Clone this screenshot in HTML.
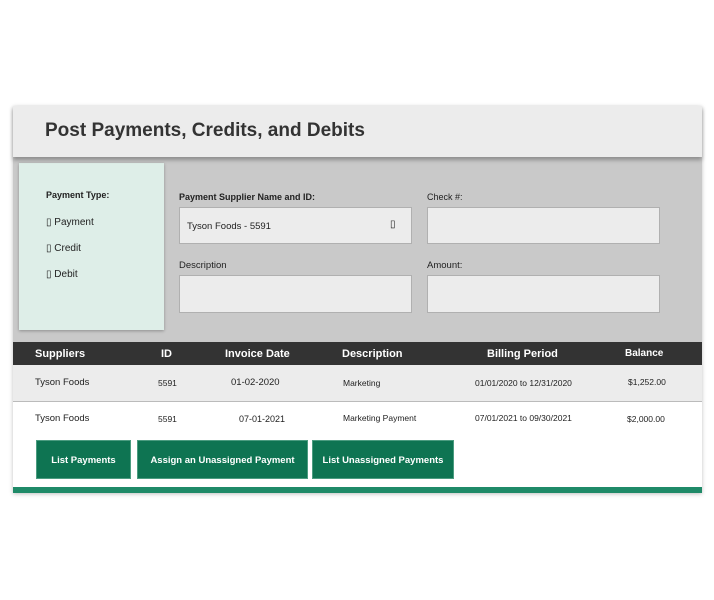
<!DOCTYPE html>
<html><head><style>
*{margin:0;padding:0;box-sizing:border-box}
body{width:714px;height:600px;background:#fff;font-family:"Liberation Sans",sans-serif;position:relative;overflow:hidden;color:#222}
.a{position:absolute}
.card{left:13px;top:106px;width:689px;height:387px;background:#fff;box-shadow:0 1px 4px rgba(0,0,0,.25)}
.hdr{left:13px;top:106px;width:689px;height:51px;background:#ececec;box-shadow:0 3px 4px rgba(0,0,0,.3);z-index:2}
.hdr span{position:absolute;left:32px;top:14px;font-size:19px;font-weight:bold;color:#333}
.gray{left:13px;top:157px;width:689px;height:185px;background:#c9c9c9}
.lp{left:19px;top:163px;width:145px;height:167px;background:#deeee8;box-shadow:0 1px 3px rgba(0,0,0,.3);font-size:10px}
.lbl{font-size:9px;font-weight:bold;color:#222}
.inp{background:#ececec;border:1px solid #b0b0b0}
.th{left:13px;top:342px;width:689px;height:23px;background:#333;color:#fff;font-weight:bold;font-size:11px}
.th span,.r span{position:absolute;top:6px}
.r{left:13px;width:689px;font-size:9px}
.btn{background:#0e7452;color:#fff;font-size:9.5px;font-weight:bold;top:440px;height:39px;line-height:39px;text-align:center;border:1px solid #4b9c80}
</style></head><body>
<div class="a card"></div>
<div class="a hdr"><span>Post Payments, Credits, and Debits</span></div>
<div class="a gray"></div>
<div class="a lp">
<div class="a lbl" style="left:27px;top:27px">Payment Type:</div>
<div class="a" style="left:27px;top:54px">▯ Payment</div>
<div class="a" style="left:27px;top:80px">▯ Credit</div>
<div class="a" style="left:27px;top:106px">▯ Debit</div>
</div>
<div class="a lbl" style="left:179px;top:192px">Payment Supplier Name and ID:</div>
<div class="a inp" style="left:179px;top:207px;width:233px;height:37px"><span class="a" style="left:7px;top:13px;font-size:9.5px">Tyson Foods - 5591</span><span class="a" style="left:210px;top:11px;font-size:10px">▯</span></div>
<div class="a" style="left:179px;top:260px;font-size:9.5px">Description</div>
<div class="a inp" style="left:179px;top:275px;width:233px;height:38px"></div>
<div class="a lbl" style="left:427px;top:192px;font-weight:normal">Check #:</div>
<div class="a inp" style="left:427px;top:207px;width:233px;height:37px"></div>
<div class="a" style="left:427px;top:260px;font-size:9.5px">Amount:</div>
<div class="a inp" style="left:427px;top:275px;width:233px;height:38px"></div>
<div class="a th">
<span style="left:22px">Suppliers</span><span style="left:148px">ID</span><span style="left:212px">Invoice Date</span><span style="left:329px">Description</span><span style="left:474px">Billing Period</span><span style="left:612px;font-size:10px">Balance</span>
</div>
<div class="a r" style="top:365px;height:37px;background:#ececec;border-bottom:1px solid #bbb">
<span style="left:22px;top:12px;font-size:9.5px">Tyson Foods</span><span style="left:145px;top:13px;font-size:8.5px">5591</span><span style="left:218px;top:12px;font-size:9.5px">01-02-2020</span><span style="left:330px;top:13px;font-size:8.5px">Marketing</span><span style="left:462px;top:13px;font-size:8.5px">01/01/2020 to 12/31/2020</span><span style="left:615px;top:12px;font-size:8.5px">$1,252.00</span>
</div>
<div class="a r" style="top:402px;height:35px">
<span style="left:22px;top:11px;font-size:9.5px">Tyson Foods</span><span style="left:145px;top:12px;font-size:8.5px">5591</span><span style="left:226px;top:12px;font-size:9px">07-01-2021</span><span style="left:330px;top:11px;font-size:8.5px">Marketing Payment</span><span style="left:462px;top:11px;font-size:8.5px">07/01/2021 to 09/30/2021</span><span style="left:614px;top:12px;font-size:8.5px">$2,000.00</span>
</div>
<div class="a btn" style="left:36px;width:95px">List Payments</div>
<div class="a btn" style="left:137px;width:171px">Assign an Unassigned Payment</div>
<div class="a btn" style="left:312px;width:142px">List Unassigned Payments</div>
<div class="a" style="left:13px;top:487px;width:689px;height:6px;background:#1f8a68"></div>
</body></html>
